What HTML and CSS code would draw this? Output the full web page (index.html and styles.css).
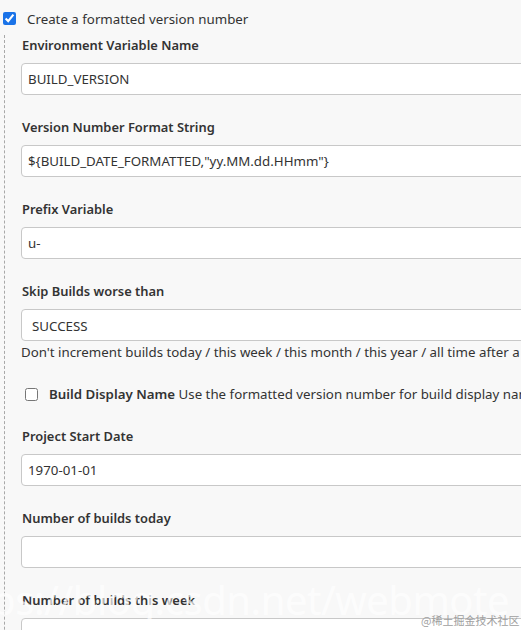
FILE: index.html
```html
<!DOCTYPE html>
<html>
<head>
<meta charset="utf-8">
<link rel="stylesheet" href="styles.css">
</head>
<body>
<div class="page">
  <div class="top-row">
    <input type="checkbox" class="cb" checked>
    <span class="top-label">Create a formatted version number</span>
  </div>
  <div class="section">
    <div class="field">
      <div class="label">Environment Variable Name</div>
      <div class="input">BUILD_VERSION</div>
    </div>
    <div class="field">
      <div class="label">Version Number Format String</div>
      <div class="input">${BUILD_DATE_FORMATTED,"yy.MM.dd.HHmm"}</div>
    </div>
    <div class="field">
      <div class="label">Prefix Variable</div>
      <div class="input">u-</div>
    </div>
    <div class="field field-skip">
      <div class="label">Skip Builds worse than</div>
      <div class="input select">SUCCESS</div>
      <div class="desc">Don't increment builds today / this week / this month / this year / all time after a failed build.</div>
    </div>
    <div class="check-row">
      <input type="checkbox" class="cb">
      <span class="check-text"><b>Build Display Name</b> Use the formatted version number for build display name.</span>
    </div>
    <div class="field">
      <div class="label">Project Start Date</div>
      <div class="input">1970-01-01</div>
    </div>
    <div class="field">
      <div class="label">Number of builds today</div>
      <div class="input"></div>
    </div>
    <div class="field">
      <div class="label">Number of builds this week</div>
      <div class="input"></div>
    </div>
  </div>
  <div class="wm-big">https://blog.csdn.net/webmote</div>
  <div class="wm-small">@稀土掘金技术社区</div>
</div>
</body>
</html>
```

FILE: styles.css
```css
html, body {
  margin: 0;
  padding: 0;
  background: #f8f8f8;
  overflow: hidden;
}
.page {
  position: relative;
  width: 521px;
  height: 630px;
  overflow: hidden;
  font-family: "Noto Sans", "Open Sans", sans-serif;
  font-size: 13.3px;
  color: #333;
}
.top-row {
  display: flex;
  align-items: center;
  height: 20px;
  padding: 8px 0 7px 3px;
}
.cb {
  width: 13px;
  height: 13px;
  margin: 0;
  accent-color: #1a73e8;
}
.top-label {
  margin-left: 11px;
  line-height: 20px;
  padding-top: 1px;
}
.section {
  margin-left: 4px;
  border-left: 1px dashed #a8a8a8;
  padding-left: 16px;
  min-height: 700px;
}
.field {
  margin-bottom: 22px;
}
.label {
  font-weight: 600;
  font-size: 12.9px;
  line-height: 20px;
  margin-bottom: 8px;
  padding-left: 1px;
}
.input {
  box-sizing: border-box;
  width: 560px;
  height: 32px;
  line-height: 31px;
  background: #fff;
  border: 1px solid #c8c8c8;
  border-radius: 4px;
  padding-left: 6px;
  white-space: nowrap;
}
.select {
  padding-left: 10px;
  line-height: 33px;
}
.field-skip {
  margin-bottom: 0;
}
.desc {
  line-height: 20px;
  white-space: nowrap;
  margin-top: 1px;
}
.check-row {
  display: flex;
  align-items: center;
  height: 20px;
  margin: 22px 0 22px 4px;
  white-space: nowrap;
}
.check-text {
  margin-left: 11px;
}
.check-text b {
  font-weight: 600;
}
.wm-big {
  position: absolute;
  right: 12px;
  top: 572px;
  font-family: "Noto Sans", sans-serif;
  font-size: 40px;
  color: rgba(255, 255, 255, 0.7);
  white-space: nowrap;
  letter-spacing: -0.5px;
}
.wm-small {
  position: absolute;
  left: 421px;
  top: 612px;
  font-family: "Noto Sans CJK SC", sans-serif;
  font-size: 11px;
  color: #a0a0a0;
  white-space: nowrap;
}
```
